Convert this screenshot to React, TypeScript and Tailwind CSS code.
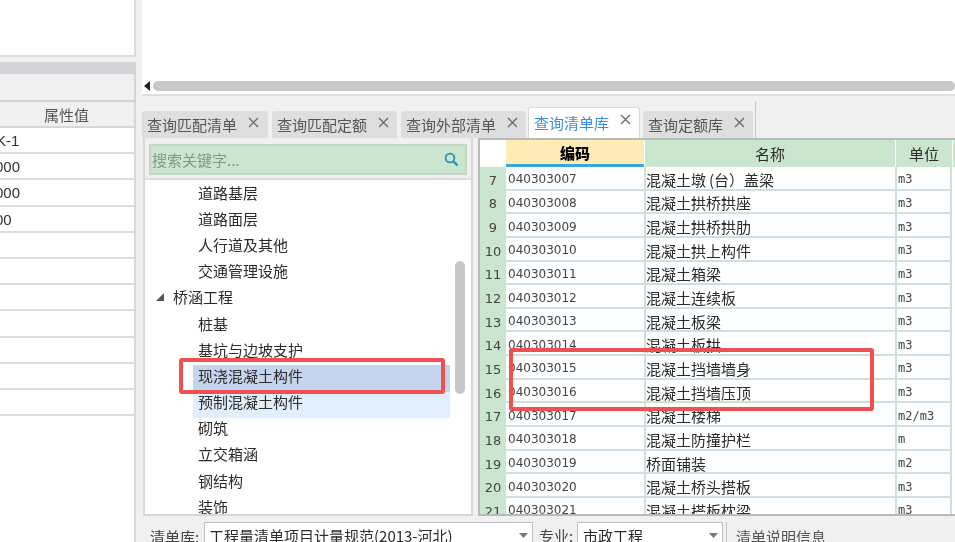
import React from "react";

const cjk = "font-['Noto_Sans_CJK_SC','Liberation_Sans',sans-serif]";

const tabs = [
  { t: "查询匹配清单", w: "w-[126px]", m: "mr-[4px]" },
  { t: "查询匹配定额", w: "w-[125px]", m: "mr-[4px]" },
  { t: "查询外部清单", w: "w-[125px]", m: "mr-[2px]" },
  { t: "查询清单库", w: "w-[112px]", m: "mr-[3px]", active: true },
  { t: "查询定额库", w: "w-[110px]", m: "" },
];

const tree: { t: string; level?: number; sel?: boolean; hov?: boolean }[] = [
  { t: "道路基层" },
  { t: "道路面层" },
  { t: "人行道及其他" },
  { t: "交通管理设施" },
  { t: "桥涵工程", level: 1 },
  { t: "桩基" },
  { t: "基坑与边坡支护" },
  { t: "现浇混凝土构件", sel: true },
  { t: "预制混凝土构件", hov: true },
  { t: "砌筑" },
  { t: "立交箱涵" },
  { t: "钢结构" },
  { t: "装饰" },
];

const rows = [
  [7, "040303007", "混凝土墩\u2009(台）盖梁", "m3"],
  [8, "040303008", "混凝土拱桥拱座", "m3"],
  [9, "040303009", "混凝土拱桥拱肋", "m3"],
  [10, "040303010", "混凝土拱上构件", "m3"],
  [11, "040303011", "混凝土箱梁", "m3"],
  [12, "040303012", "混凝土连续板", "m3"],
  [13, "040303013", "混凝土板梁", "m3"],
  [14, "040303014", "混凝土板拱", "m3"],
  [15, "040303015", "混凝土挡墙墙身", "m3"],
  [16, "040303016", "混凝土挡墙压顶", "m3"],
  [17, "040303017", "混凝土楼梯", "m2/m3"],
  [18, "040303018", "混凝土防撞护栏", "m"],
  [19, "040303019", "桥面铺装", "m2"],
  [20, "040303020", "混凝土桥头搭板", "m3"],
  [21, "040303021", "混凝土搭板枕梁", "m3"],
];

const leftRows = ["K-1", "000", "000", "00", "", "", "", "", "", "", ""];

function Close() {
  return (
    <svg width="11" height="11" viewBox="0 0 11 11" className="shrink-0 mb-[5px]">
      <path d="M1 1 L10 10 M10 1 L1 10" stroke="#666" strokeWidth="1.2" fill="none" />
    </svg>
  );
}

function Caret() {
  return (
    <svg width="9" height="5" viewBox="0 0 9 5" className="shrink-0">
      <path d="M0 0 H9 L4.5 5 Z" fill="#777" />
    </svg>
  );
}

export default function App() {
  return (
    <div className={`${cjk} relative w-[955px] h-[542px] overflow-hidden bg-[#f0f0f0] flex text-[15px] text-[#2b2b2b] blur-[0.5px]`}>
      {/* left column */}
      <div className="w-[136px] shrink-0 flex flex-col">
        <div className="h-[57px] bg-white border-r-2 border-b-2 border-[#dcdcdc] shrink-0" />
        <div className="h-[5px] shrink-0" />
        <div className="h-[12px] bg-[#d3d4d8] shrink-0" />
        <div className="h-[28px] bg-[#f0f0f0] border-b-2 border-[#d4d4d4] border-r-2 shrink-0" />
        <div className="h-[26px] bg-[#f0f0f0] border-r-2 border-b-2 border-[#d8d8d8] shrink-0 flex items-center justify-end pr-[45px] text-[#555] leading-none">
          属性值
        </div>
        <div className="flex-1 bg-white border-r-2 border-[#d8d8d8]">
          {leftRows.map((v, i) => (
            <div
              key={i}
              className="h-[26.2px] border-b-2 border-[#dcdcdc] flex items-center pt-[1px] font-['Liberation_Sans',sans-serif] text-[15px] leading-none text-[#333] overflow-hidden"
            >
              <span className={v === "K-1" ? "-ml-[4px]" : "-ml-[5px]"}>{v}</span>
            </div>
          ))}
        </div>
      </div>

      <div className="w-[6px] shrink-0" />

      {/* right column */}
      <div className="flex-1 flex flex-col min-w-0">
        <div className="h-[96px] bg-white shrink-0 border-b-2 border-[#dedede] flex flex-col justify-end pb-[3px]">
          <div className="h-[10px] flex items-center pl-[2px] gap-[3px]">
            <svg width="6" height="10" viewBox="0 0 6 10" className="shrink-0">
              <path d="M6 0 V10 L0 5 Z" fill="#222" />
            </svg>
            <div className="flex-1 h-[10px] rounded-[5px] bg-[#c8c8c8]" />
          </div>
        </div>

        {/* tabs */}
        <div className="h-[42px] shrink-0 flex items-end">
          {tabs.map((t) => (
            <div
              key={t.t}
              className={`${t.w} ${t.m} flex items-center gap-[11px] pl-[5px] rounded-t-[3px] leading-none ${
                t.active
                  ? "h-[31px] bg-white text-[#3a8ee6] border border-b-0 border-[#d8d8d8] pb-[2px]"
                  : "h-[27px] bg-[#dedede] text-[#555]"
              }`}
            >
              <span className="whitespace-nowrap">{t.t}</span>
              <Close />
            </div>
          ))}
          <div className="h-[37px] w-px bg-[#c8c8c8] ml-[2px]" />
        </div>

        {/* body */}
        <div className="flex-1 flex min-h-0">
          {/* tree panel */}
          <div className="w-[330px] ml-[1px] shrink-0 h-[378px] bg-white border-x-2 border-b-2 border-[#d8d8d8] flex flex-col">
            <div className="h-[42px] shrink-0 bg-[#f0f0f0] border-b-2 border-[#dcdcdc] pt-[6px] px-[4px]">
              <div className="h-[31px] bg-[#cbe6cf] border-2 border-[#c8d6ca] flex items-center justify-between pl-[1px] pr-[6px] text-[#7f9a86] leading-none">
                <span>搜索关键字...</span>
                <svg width="15" height="15" viewBox="0 0 15 15" fill="none" stroke="#2d8fc4" strokeWidth="1.8">
                  <circle cx="6" cy="6" r="4.4" />
                  <path d="M9.5 9.5 L13.5 13.5" strokeWidth="2.4" />
                </svg>
              </div>
            </div>
            <div className="relative flex-1 overflow-hidden">
              <div className="absolute left-[310px] top-[81px] w-[10px] h-[133px] rounded-[5px] bg-[#c8c8c8]" />
              <div className="mt-[2px]">
                {tree.map((n) => (
                  <div
                    key={n.t}
                    className={`h-[26.2px] flex items-center leading-none pb-[6px] ${
                      n.level ? "pl-[11px]" : "ml-[48px] mr-[21px] pl-[5px]"
                    } ${n.sel ? "bg-[#c5d5ee]" : n.hov ? "bg-[#e1effd]" : ""}`}
                  >
                    {n.level ? (
                      <svg width="8" height="8" viewBox="0 0 8 8" className="mr-[9px] shrink-0">
                        <path d="M8 0 V8 H0 Z" fill="#555" />
                      </svg>
                    ) : null}
                    <span className="whitespace-nowrap">{n.t}</span>
                  </div>
                ))}
              </div>
            </div>
          </div>

          <div className="w-[5px] shrink-0" />

          {/* table */}
          <div className="flex-1 h-[378px] bg-white border-l-2 border-y-2 border-[#b8bcb8] overflow-hidden">
            <div className="flex h-[27px] leading-none">
              <div className="w-[26px] bg-white shrink-0" />
              <div className="w-[138px] shrink-0 bg-[#fdecb5] border-b-[3px] border-[#3aa7dc] flex items-center justify-center font-black text-black">
                编码
              </div>
              <div className="w-[251px] shrink-0 bg-[#cbe6cf] border-l border-white flex items-center justify-center">
                名称
              </div>
              <div className="w-[57px] shrink-0 bg-[#cbe6cf] border-l border-white flex items-center justify-center">
                单位
              </div>
              <div className="flex-1 bg-[#cbe6cf] border-l border-white" />
            </div>
            {rows.map((r) => (
              <div key={r[0]} className="flex h-[23.65px] leading-none">
                <div className="w-[26px] shrink-0 bg-[#cbe6cf] flex items-center justify-center pt-[3px] font-['DejaVu_Sans',sans-serif] text-[13px] text-[#444]">
                  {r[0]}
                </div>
                <div className="w-[138px] shrink-0 border-b-2 border-[#d0e2d4] flex items-center pt-[3px] pl-[2px] font-['DejaVu_Sans',sans-serif] text-[12px] text-[#444]">
                  {r[1]}
                </div>
                <div className="w-[251px] shrink-0 border-l-2 border-b-2 border-[#d0e2d4] flex items-center pt-[3px] text-[15px] whitespace-nowrap">
                  {r[2]}
                </div>
                <div className="w-[57px] shrink-0 border-l-2 border-r-2 border-b-2 border-[#d0e2d4] flex items-center pt-[3px] pl-[1px] font-['DejaVu_Sans_Mono',monospace] text-[12px] text-[#444]">
                  {r[3]}
                </div>
              </div>
            ))}
          </div>
        </div>

        {/* bottom bar */}
        <div className="absolute left-[142px] top-[516px] right-0 h-[26px] bg-[#f0f0f0] flex items-start pt-[6px] pl-[8px] leading-none">
          <span className="w-[54px] pt-[7px] text-[#444]">清单库:</span>
          <div className="w-[329px] h-[30px] bg-white border border-[#c0c0c0] flex items-start justify-between pl-[4px] pr-[4px] pt-[5px]">
            <span className="whitespace-nowrap">工程量清单项目计量规范(2013-河北)</span>
            <span className="pt-[5px]"><Caret /></span>
          </div>
          <span className="ml-[6px] w-[38px] pt-[6px] text-[#444]">专业:</span>
          <div className="w-[146px] h-[30px] bg-white border border-[#c0c0c0] flex items-start justify-between pl-[5px] pr-[4px] pt-[5px]">
            <span>市政工程</span>
            <span className="pt-[5px]"><Caret /></span>
          </div>
          <div className="ml-[3px] w-px h-[30px] bg-[#c8c8c8]" />
          <span className="ml-[9px] pt-[7px] text-[#555]">清单说明信息</span>
        </div>
      </div>

      {/* red annotation boxes */}
      <div className="absolute left-[179px] top-[358px] w-[266px] h-[36px] border-4 border-[#ef5050] rounded-[3px]" />
      <div className="absolute left-[509px] top-[348px] w-[365px] h-[63px] border-4 border-[#ef5050] rounded-[3px]" />
    </div>
  );
}
